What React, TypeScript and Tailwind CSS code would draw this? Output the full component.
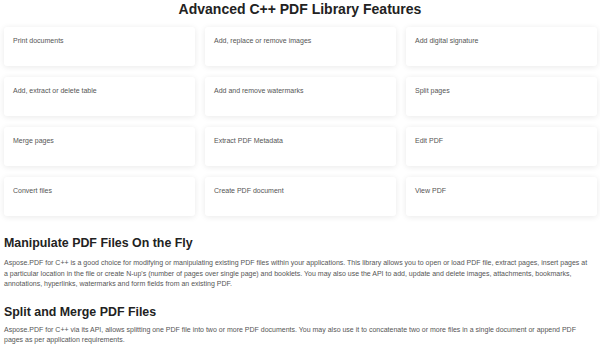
const features = [
  "Print documents",
  "Add, replace or remove images",
  "Add digital signature",
  "Add, extract or delete table",
  "Add and remove watermarks",
  "Split pages",
  "Merge pages",
  "Extract PDF Metadata",
  "Edit PDF",
  "Convert files",
  "Create PDF document",
  "View PDF",
];

export default function App() {
  return (
    <div className="w-[600px] h-[347px] overflow-hidden bg-white" style={{ fontFamily: '"Liberation Sans", Arial, sans-serif' }}>
      {/* Features grid */}
      <h2 className="text-center text-[14px] leading-[16px] font-bold text-[#222] pt-[1px]">
        Advanced C++ PDF Library Features
      </h2>
      <div className="grid grid-cols-3 gap-x-[10px] gap-y-[11px] w-[593px] ml-[4px] mt-[10px]">
        {features.map((f) => (
          <div
            key={f}
            className="h-[39px] rounded-[3px] bg-white shadow-[0_1px_6px_rgba(0,0,0,0.09)] px-[9px] pt-[9px]"
          >
            <p className="text-[7px] leading-[9px] text-[#555]">{f}</p>
          </div>
        ))}
      </div>

      {/* Text sections */}
      <div className="px-[4px] mt-[20px]">
        <h3 className="text-[12.4px] leading-[14px] font-bold text-[#222]">Manipulate PDF Files On the Fly</h3>
        <p className="mt-[8px] text-[7px] leading-[10.5px] text-[#555] w-[587px]">
          Aspose.PDF for C++ is a good choice for modifying or manipulating existing PDF files within your applications. This library allows you to open or load PDF file, extract pages, insert pages at a particular location in the file or create N-up's (number of pages over single page) and booklets. You may also use the API to add, update and delete images, attachments, bookmarks, annotations, hyperlinks, watermarks and form fields from an existing PDF.
        </p>
        <h3 className="mt-[15px] text-[12.4px] leading-[14px] font-bold text-[#222]">Split and Merge PDF Files</h3>
        <p className="mt-[6px] text-[7px] leading-[10.5px] text-[#555] w-[587px]">
          Aspose.PDF for C++ via its API, allows splitting one PDF file into two or more PDF documents. You may also use it to concatenate two or more files in a single document or append PDF pages as per application requirements.
        </p>
      </div>
    </div>
  );
}
